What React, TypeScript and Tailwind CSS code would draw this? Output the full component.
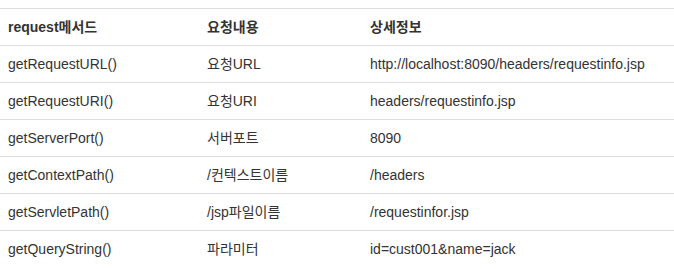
import React from 'react';

const rows = [
  ['getRequestURL()', '요청URL', 'http://localhost:8090/headers/requestinfo.jsp'],
  ['getRequestURI()', '요청URI', 'headers/requestinfo.jsp'],
  ['getServerPort()', '서버포트', '8090'],
  ['getContextPath()', '/컨텍스트이름', '/headers'],
  ['getServletPath()', '/jsp파일이름', '/requestinfor.jsp'],
  ['getQueryString()', '파라미터', 'id=cust001&name=jack'],
];

export default function App() {
  return (
    <div className="w-[674px] h-[269px] bg-white pt-[8px] text-[14px] leading-[20px] text-[#333] font-['Liberation_Sans','Noto_Sans_CJK_KR',sans-serif]">
      <table className="w-full border-collapse table-fixed">
        <colgroup>
          <col className="w-[199px]" />
          <col className="w-[163px]" />
          <col />
        </colgroup>
        <thead>
          <tr className="border-t border-[#ddd]">
            <th className="px-2 py-2 text-left font-bold">request메서드</th>
            <th className="px-2 py-2 text-left font-bold">요청내용</th>
            <th className="px-2 py-2 text-left font-bold">상세정보</th>
          </tr>
        </thead>
        <tbody>
          {rows.map((r) => (
            <tr key={r[0]} className="border-t border-[#ddd]">
              {r.map((c, i) => (
                <td key={i} className="px-2 py-2 whitespace-nowrap">
                  {c}
                </td>
              ))}
            </tr>
          ))}
        </tbody>
      </table>
    </div>
  );
}
